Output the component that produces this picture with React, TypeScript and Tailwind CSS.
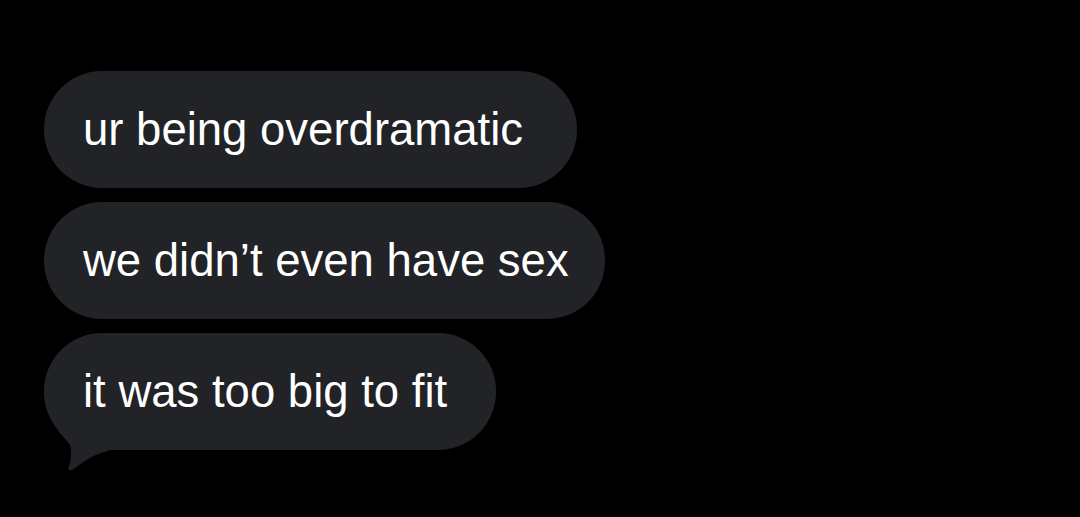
import React from "react";

const messages = [
  { text: "ur being overdramatic", width: "w-[533px]" },
  { text: "we didn\u2019t even have sex", width: "w-[561px]" },
  { text: "it was too big to fit", width: "w-[452px]" },
];

function Bubble({
  text,
  width,
  tail,
}: {
  text: string;
  width: string;
  tail?: boolean;
}) {
  return (
    <div className="relative self-start">
      <div
        className={`${width} h-[117px] flex items-center pl-[39px] rounded-[58px] bg-[#222327] text-white text-[45.5px] leading-none whitespace-nowrap`}
      >
        {text}
      </div>
      {tail && (
        <svg
          className="absolute left-0 top-[90px]"
          width="70"
          height="50"
          viewBox="0 0 70 50"
        >
          <path
            d="M10 0 C 14 10, 22 16, 26 22 C 28 28, 27 38, 25 43 C 23 47, 26 48, 30 46 C 40 38, 50 31, 64 28 L 64 0 Z"
            fill="#222327"
          />
        </svg>
      )}
    </div>
  );
}

export default function App() {
  return (
    <div
      className="w-[1080px] h-[517px] bg-black flex flex-col gap-[14px] pt-[71px] pl-[44px]"
      style={{ fontFamily: '"Liberation Sans", Arial, sans-serif' }}
    >
      {messages.map((m, i) => (
        <Bubble
          key={i}
          text={m.text}
          width={m.width}
          tail={i === messages.length - 1}
        />
      ))}
    </div>
  );
}
